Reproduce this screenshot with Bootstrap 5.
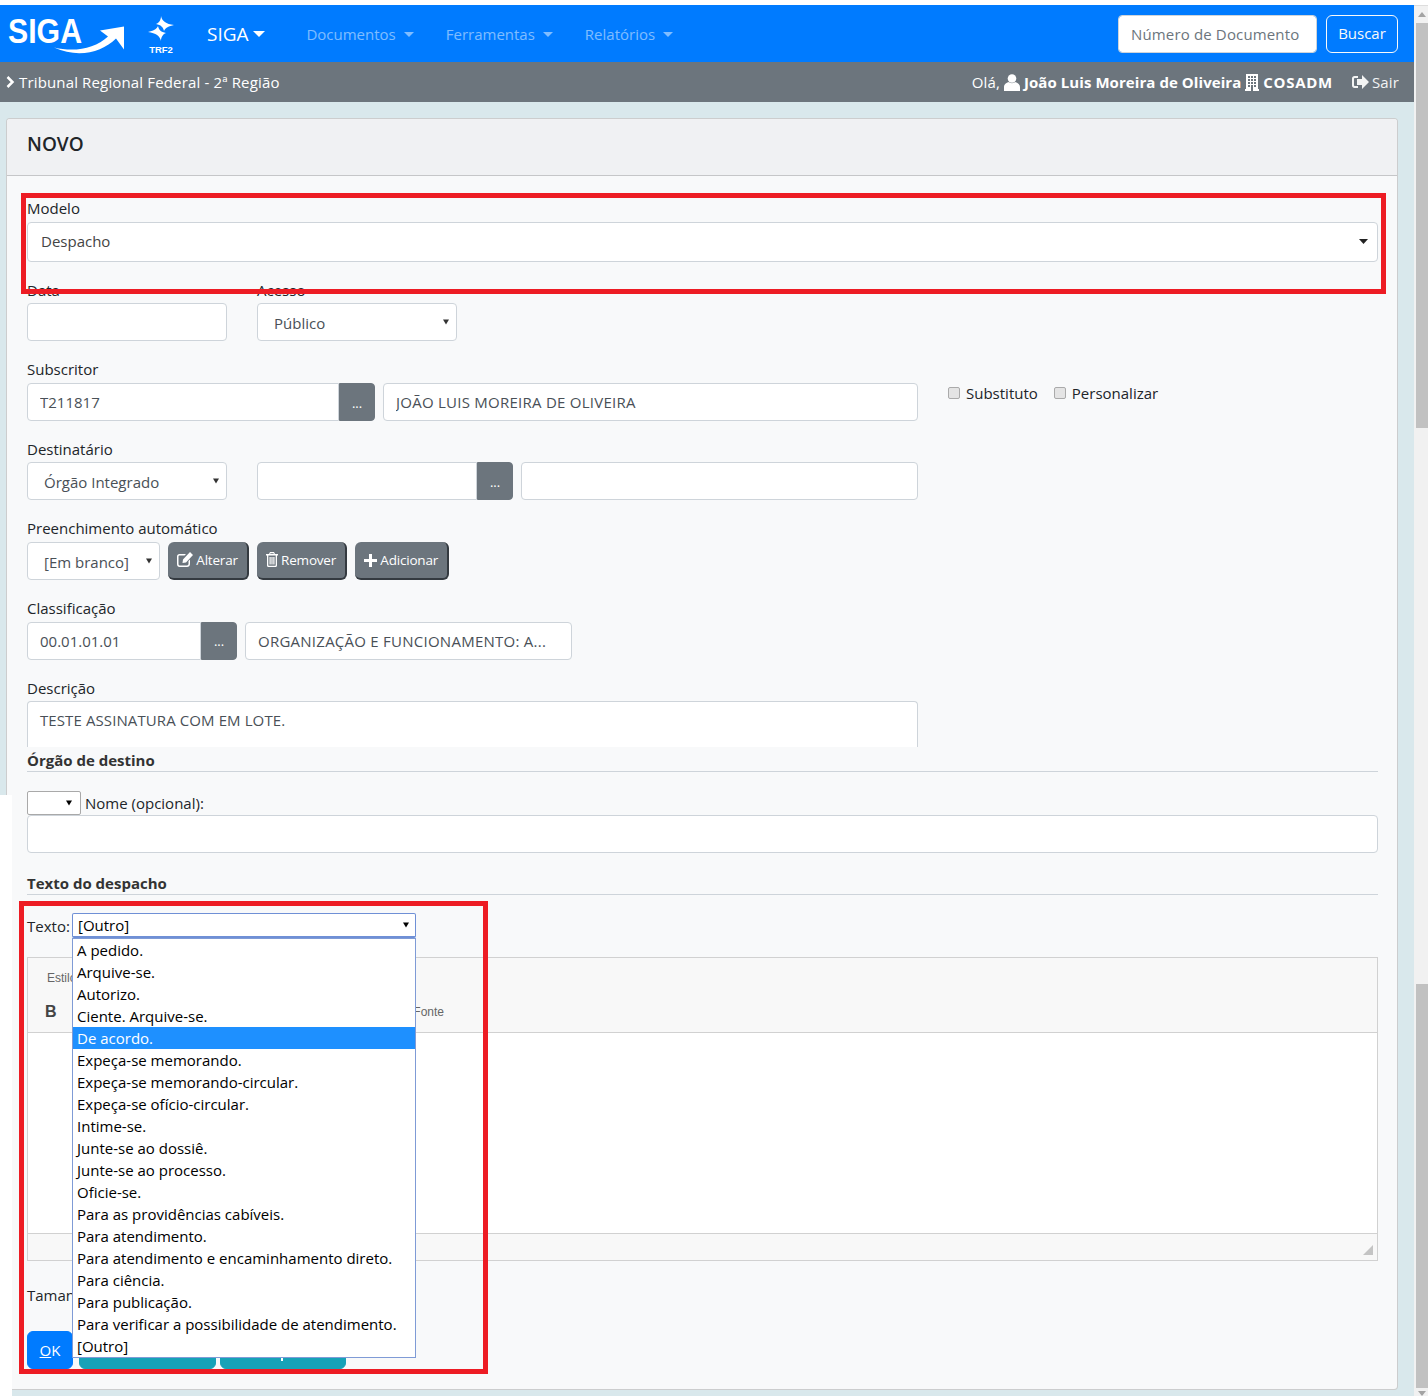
<!DOCTYPE html>
<html lang="pt-BR">
<head>
  <meta charset="UTF-8" />
  <meta name="viewport" content="width=device-width, initial-scale=1.0"/>
  <title>SIGA - Novo documento</title>
  <link href="https://cdn.jsdelivr.net/npm/bootstrap@5.3.0/dist/css/bootstrap.min.css" rel="stylesheet">
  <style>
    :root {
      --bs-border-radius: .25rem;
    }

    html, body {
      height: 1396px;
      overflow: hidden;
    }

    body {
      background: #fff;
      color: #212529;
      font-family: "Open Sans", "Liberation Sans", sans-serif;
      font-size: 15px;
      line-height: 24px;
    }

    .shell {
      position: relative;
      height: 1396px;
      padding-top: 5px;
    }

    .page {
      width: 1414px;
      background: #d9e8ec;
      height: 1391px;
    }

    /* fake browser scrollbar */
    .scroll-rail {
      width: 14px;
      background: #f1f1f1;
      height: 1391px;
      border-top: 1px solid #ddd;
    }

    .scroll-arrow {
      width: 0;
      height: 0;
      margin: 6px 0 0 4px;
      border-left: 4px solid transparent;
      border-right: 4px solid transparent;
      border-bottom: 5px solid #a3a3a3;
    }

    .scroll-thumb {
      width: 12px;
      margin-left: 2px;
      background: #c1c1c1;
    }

    .thumb-one { height: 405px; margin-top: 6px; }
    .thumb-two { height: 404px; margin-top: 556px; }
    .scroll-arrow-down {
      border-bottom: 0;
      border-top: 5px solid #a3a3a3;
      margin-top: 3px;
    }

    /* top bars */
    .bar-main {
      height: 57px;
      background: #007bff;
      padding: 0 16px 0 0;
    }

    .logo-siga { width: 126px; height: 44px; margin-left: 6px; }
    .logo-trf { width: 30px; height: 42px; margin-left: 14px; }
    .logo-text { font-family: "Liberation Sans", sans-serif; fill: #fff; font-weight: 700; }

    .brand-link {
      color: #fff;
      font-size: 19px;
      margin-left: 31px;
      margin-right: 25px;
    }

    .brand-link.dropdown-toggle::after { vertical-align: .18em; border-width: .36em .36em 0; }

    .bar-main .nav-link {
      color: rgba(255, 255, 255, .5);
      padding: 0 16px;
    }

    .bar-main .nav-link.dropdown-toggle::after {
      margin-left: 8px;
      vertical-align: .2em;
      border-width: 5px 5px 0;
    }

    .doc-search {
      width: 199px;
      height: 38px;
      margin-right: 9px;
      letter-spacing: .15px;
    }

    .doc-search::placeholder { color: #6c757d; }

    .buscar-btn { height: 38px; width: 72px; padding: 0; font-size: 15px; }

    .bar-sub {
      height: 40px;
      background: #6c757d;
      color: #fff;
      padding: 0 15px 0 6px;
      letter-spacing: .15px;
    }

    .bar-sub svg { fill: #fff; flex-shrink: 0; }
    .bar-sub strong { letter-spacing: .07px; }
    .bar-sub .org-name { letter-spacing: .7px; }
    .exit-link { margin-left: 19px; opacity: .92; gap: 3px; }

    /* card */
    .main-area { padding: 16px 16px 0 6px; }

    .form-card {
      background: #f8f9fa;
      height: 1272px;
    }

    .form-card .card-header {
      height: 60px;
      padding: 0 20px;
      font-size: 19px;
      font-weight: 600;
      line-height: 50px;
      background: #f0f1f3;
    }

    .form-card .card-body { padding: 20px 19px 20px 20px; }

    .fld-label { display: block; margin-bottom: 1.6px; }
    .fld-group { margin-bottom: 16px; }

    .form-control, .form-select {
      font-size: 15px;
      color: #495057;
      height: 38px;
      border-color: #ced4da;
      border-radius: .25rem;
    }

    .upper-txt { letter-spacing: .25px; }

    .form-select {
      padding: 2px 20px 0 16px;
      background-image: url("data:image/svg+xml,%3Csvg xmlns='http://www.w3.org/2000/svg' viewBox='0 0 7 6'%3E%3Cpath d='M0 0h7L3.5 6z' fill='%23333'/%3E%3C/svg%3E");
      background-size: 6px 6px;
      background-position: right 7px center;
    }

    .model-select {
      height: 40px;
      padding: 0 20px 0 13px;
      color: #444;
      background-image: url("data:image/svg+xml,%3Csvg xmlns='http://www.w3.org/2000/svg' viewBox='0 0 9 5'%3E%3Cpath d='M0 0h9L4.5 5z' fill='%23222'/%3E%3C/svg%3E");
      background-size: 9px 5px;
      background-position: right 9px center;
    }

    .dots-btn {
      width: 36px;
      height: 38px;
      padding: 3px 0 0;
      flex-shrink: 0;
      font-size: 13px;
      background: #6c757d;
      border-color: #6c757d;
    }

    .w-27 { width: 200px; }
    .w-133 { width: 133px; }
    .w-174 { width: 174px; }
    .w-220 { width: 220px; }
    .w-312 { width: 312px; }
    .w-327 { width: 327px; }
    .w-397 { width: 397px; }
    .w-535 { width: 535px; }
    .ms-gap { margin-left: 8px; }
    .ms-col { margin-left: 30px; }

    .join-left { border-radius: .25rem 0 0 .25rem; }
    .join-right { border-radius: 0 .25rem .25rem 0; }

    .check-line { margin-left: 30px; height: 20px; align-self: flex-start; }
    .check-line label { display: flex; align-items: center; gap: 6px; margin-right: 16px; }
    .check-box {
      appearance: none;
      width: 12px;
      height: 12px;
      background: #e4e4e4;
      border: 1px solid #aaa;
      border-radius: 2px;
      margin: 0;
    }

    .action-btn {
      height: 38px;
      padding: 1px 9px 0;
      font-size: 13.5px;
      color: #fff;
      background: #6c757d;
      border: 0;
      border-right: 2px solid #343a40;
      border-bottom: 2px solid #343a40;
      margin-left: 8px;
      letter-spacing: -.2px;
    }

    .action-btn svg { fill: #fff; vertical-align: -2px; }

    .desc-box {
      width: 891px;
      height: 46px;
      resize: none;
      overflow: hidden;
      border-bottom: 0;
      border-radius: .25rem .25rem 0 0;
      padding-top: 7px;
      letter-spacing: .1px;
    }

    .sect-title {
      font-weight: 700;
      color: #333;
      border-bottom: 1px solid #ced4da;
      height: 25px;
      line-height: 26px;
    }

    .nome-row { margin-top: 18.8px; }
    .texto-title { margin-top: 17px; }

    .mini-select {
      width: 54px;
      height: 24px;
      padding: 0;
      background-color: #fff;
      border: 1px solid #a9a9a9;
      border-radius: 2px;
      background-position: right 8px center;
      background-image: url("data:image/svg+xml,%3Csvg xmlns='http://www.w3.org/2000/svg' viewBox='0 0 7 6'%3E%3Cpath d='M0 0h7L3.5 6z' fill='%23000'/%3E%3C/svg%3E");
    }

    .text-row { margin-top: 18px; height: 25px; }
    .text-name { width: 41px; flex-shrink: 0; white-space: nowrap; }
    .text-pick { position: relative; margin-left: 4px; }

    .pick-select {
      width: 344px;
      height: 25px;
      padding: 0 0 0 5px;
      color: #000;
      background-color: #fff;
      border: 1px solid #6f90d6;
      border-bottom-width: 2px;
      border-radius: 2px;
      background-position: right 6px center;
      background-image: url("data:image/svg+xml,%3Csvg xmlns='http://www.w3.org/2000/svg' viewBox='0 0 7 6'%3E%3Cpath d='M0 0h7L3.5 6z' fill='%23000'/%3E%3C/svg%3E");
    }

    .pick-list {
      position: absolute;
      z-index: 5;
      top: 25px;
      left: 0;
      width: 344px;
      background: #fff;
      border: 1px solid #7f9bd6;
      color: #000;
      line-height: 22px;
      margin: 0;
      padding: 0;
      list-style: none;
    }

    .pick-list li { height: 22px; padding-left: 4px; white-space: nowrap; }
    .pick-list li.on { background: #1e90ff; color: #fff; }

    .editor-box {
      margin-top: 19px;
      height: 304px;
      border: 1px solid #d1d1d1;
      background: #f8f8f8;
      font-family: "Liberation Sans", sans-serif;
      font-size: 12px;
      color: #666;
    }

    .editor-tools {
      height: 75px;
      border-bottom: 1px solid #d1d1d1;
      padding: 8px 0 0 19px;
    }

    .editor-tools .tool-row { width: 397px; margin-top: 10px; }
    .editor-tools b { font-size: 16px; color: #444; margin-left: -2px; }

    .editor-body { height: 201px; background: #fff; border-bottom: 1px solid #d1d1d1; }

    .editor-foot { height: 25px; padding: 0 4px 4px 0; }
    .grip { width: 0; height: 0; border-left: 10px solid transparent; border-bottom: 10px solid #c4c4c4; }

    .size-row { margin-top: 22px; height: 24px; }

    .foot-btns { margin-top: 24px; }
    .foot-btns .btn { height: 38px; padding: 0; font-size: 15px; }
    .btn-ok { width: 46px; margin-right: 6px; background: #007bff; border-color: #007bff; }
    .btn-look { background: #17a2b8; border-color: #17a2b8; color: #fff; }
    .look-one { width: 137px; margin-right: 4px; }
    .look-two { width: 126px; position: relative; }
    /* bit of a letter's tail that peeks out under the open list */
    .look-two::after {
      content: "";
      position: absolute;
      left: 60px;
      top: 26px;
      width: 2px;
      height: 3px;
      background: #fff;
    }

    /* annotations laid over the page */
    .mark-red {
      position: absolute;
      z-index: 9;
      border: 5px solid #ed1c24;
      pointer-events: none;
    }

    .mark-model { left: 21px; top: 193px; width: 1365px; height: 101px; }
    .mark-text { left: 19px; top: 901px; width: 469px; height: 473px; }

    .white-edge {
      position: absolute;
      z-index: 3;
      left: 0;
      top: 795px;
      width: 12px;
      height: 601px;
      background: #fff;
    }
  </style>
</head>
<body>
  <div class="shell">
    <div class="d-flex">
      <div class="page">
        <nav class="bar-main d-flex align-items-center">
          <svg class="logo-siga" viewBox="0 0 126 44">
            <text class="logo-text" x="2" y="30.5" font-size="35" textLength="74" lengthAdjust="spacingAndGlyphs">SIGA</text>
            <path d="M48 35.5C69 40.5 89 36.5 102 24.5L94 18.5L118 14.5L118 37.5L110 26.5C96 40.5 72 46.5 48 35.5Z" fill="#fff"/>
          </svg>
          <svg class="logo-trf" viewBox="0 0 30 42">
            <path d="M15 3C16 8 20 11 28 12C23 13 19 15 18 18C17 14 15 12 10 11C13 10 15 7 15 3Z" fill="#fff"/>
            <path d="M15 3C16 8 20 11 28 12C23 13 19 15 18 18C17 14 15 12 10 11C13 10 15 7 15 3Z" fill="#fff" transform="rotate(180 15 15.5)"/>
            <text class="logo-text" x="15" y="40" font-size="9.5" text-anchor="middle">TRF2</text>
          </svg>
          <a class="brand-link dropdown-toggle text-decoration-none" href="#">SIGA</a>
          <a class="nav-link dropdown-toggle" href="#">Documentos</a>
          <a class="nav-link dropdown-toggle" href="#">Ferramentas</a>
          <a class="nav-link dropdown-toggle" href="#">Relatórios</a>
          <input class="form-control doc-search ms-auto" type="text" placeholder="Número de Documento">
          <button class="btn btn-outline-light buscar-btn" type="button">Buscar</button>
        </nav>

        <div class="bar-sub d-flex align-items-center">
          <svg width="9" height="12" viewBox="0 0 9 12"><path d="M1.5 1L6.5 6L1.5 11" fill="none" stroke="#fff" stroke-width="2.5"/></svg>
          <span class="ms-1">Tribunal Regional Federal - 2ª Região</span>
          <span class="ms-auto">Olá,</span>
          <svg class="ms-1" width="16" height="17" viewBox="0 0 16 17"><circle cx="8" cy="4.5" r="4.3"/><path d="M0 17V13C0 10 3 8.5 5 8C6 9.5 10 9.5 11 8C13 8.5 16 10 16 13V17Z"/></svg>
          <strong class="ms-1">João Luis Moreira de Oliveira</strong>
          <svg class="ms-1" width="14" height="17" viewBox="0 0 14 17"><path fill-rule="evenodd" d="M1 0H13V15H14V17H0V15H1ZM3 2V4H5V2ZM6 2V4H8V2ZM9 2V4H11V2ZM3 5V7H5V5ZM6 5V7H8V5ZM9 5V7H11V5ZM3 8V10H5V8ZM6 8V10H8V8ZM9 8V10H11V8ZM3 11V13H5V11ZM9 11V13H11V11ZM6 11V17H8V11Z"/></svg>
          <strong class="ms-1 org-name">COSADM</strong>
          <span class="exit-link d-flex align-items-center">
            <svg width="17" height="14" viewBox="0 0 17 14"><path d="M6 1H2.5C1 1 0 2 0 3.5V10.5C0 12 1 13 2.5 13H6V11H3C2.4 11 2 10.6 2 10V4C2 3.4 2.4 3 3 3H6ZM10 0L17 7L10 14V10H5V4H10Z"/></svg>
            <span>Sair</span>
          </span>
        </div>

        <div class="main-area">
          <div class="card form-card">
            <div class="card-header">NOVO</div>
            <div class="card-body">
              <div class="fld-group">
                <label class="fld-label">Modelo</label>
                <select class="form-select model-select"><option>Despacho</option></select>
              </div>

              <div class="fld-group d-flex">
                <div class="w-27">
                  <label class="fld-label">Data</label>
                  <input class="form-control" type="text">
                </div>
                <div class="w-27 ms-col">
                  <label class="fld-label">Acesso</label>
                  <select class="form-select"><option>Público</option></select>
                </div>
              </div>

              <div class="fld-group">
                <label class="fld-label">Subscritor</label>
                <div class="d-flex">
                  <input class="form-control w-312 join-left" type="text" value="T211817">
                  <button class="btn btn-secondary dots-btn join-right" type="button">...</button>
                  <input class="form-control w-535 ms-gap upper-txt" type="text" value="JOÃO LUIS MOREIRA DE OLIVEIRA">
                  <div class="check-line d-flex align-items-center">
                    <label><input class="check-box" type="checkbox">Substituto</label>
                    <label><input class="check-box" type="checkbox">Personalizar</label>
                  </div>
                </div>
              </div>

              <div class="fld-group">
                <label class="fld-label">Destinatário</label>
                <div class="d-flex">
                  <select class="form-select w-27"><option>Órgão Integrado</option></select>
                  <input class="form-control w-220 ms-col join-left" type="text">
                  <button class="btn btn-secondary dots-btn join-right" type="button">...</button>
                  <input class="form-control w-397 ms-gap" type="text">
                </div>
              </div>

              <div class="fld-group">
                <label class="fld-label">Preenchimento automático</label>
                <div class="d-flex">
                  <select class="form-select w-133"><option>[Em branco]</option></select>
                  <button class="btn action-btn" type="button">
                    <svg width="16" height="15" viewBox="0 0 16 15"><path fill-rule="evenodd" d="M2.5 2H9L7.5 3.5H2.5C2 3.5 1.5 4 1.5 4.5V12C1.5 12.7 2 13.5 2.5 13.5H10C10.7 13.5 11.5 12.7 11.5 12V9L13 7.5V12C13 13.7 11.7 15 10 15H2.5C1 15 0 13.7 0 12V4.5C0 3 1 2 2.5 2ZM13 0L16 3L9 10.5L5.5 11L6 7.5Z"/></svg>
                    Alterar
                  </button>
                  <button class="btn action-btn" type="button">
                    <svg width="12" height="15" viewBox="0 0 12 15"><path fill-rule="evenodd" d="M4 0H8L9 2H12V3.5H11V13.5C11 14.4 10.4 15 9.5 15H2.5C1.6 15 1 14.4 1 13.5V3.5H0V2H3ZM4.5 1.2L4.2 2H7.8L7.5 1.2ZM2.3 3.5V13.2C2.3 13.5 2.5 13.7 2.8 13.7H9.2C9.5 13.7 9.7 13.5 9.7 13.2V3.5ZM3.5 5H4.7V12.5H3.5ZM5.4 5H6.6V12.5H5.4ZM7.3 5H8.5V12.5H7.3Z"/></svg>
                    Remover
                  </button>
                  <button class="btn action-btn" type="button">
                    <svg width="13" height="13" viewBox="0 0 13 13"><path d="M5 0H8V5H13V8H8V13H5V8H0V5H5Z"/></svg>
                    Adicionar
                  </button>
                </div>
              </div>

              <div class="fld-group">
                <label class="fld-label">Classificação</label>
                <div class="d-flex">
                  <input class="form-control w-174 join-left" type="text" value="00.01.01.01">
                  <button class="btn btn-secondary dots-btn join-right" type="button">...</button>
                  <input class="form-control w-327 ms-gap upper-txt" type="text" value="ORGANIZAÇÃO E FUNCIONAMENTO: A...">
                </div>
              </div>

              <label class="fld-label">Descrição</label>
              <textarea class="form-control desc-box">TESTE ASSINATURA COM EM LOTE.</textarea>

              <div class="sect-title">Órgão de destino</div>
              <div class="d-flex align-items-center nome-row">
                <select class="form-select mini-select"><option></option></select>
                <span class="ms-1">Nome (opcional):</span>
              </div>
              <input class="form-control" type="text">

              <div class="sect-title texto-title">Texto do despacho</div>
              <div class="text-row d-flex align-items-center">
                <span class="text-name">Texto:</span>
                <div class="text-pick">
                  <select class="form-select pick-select"><option>[Outro]</option></select>
                  <ul class="pick-list">
                    <li>A pedido.</li>
                    <li>Arquive-se.</li>
                    <li>Autorizo.</li>
                    <li>Ciente. Arquive-se.</li>
                    <li class="on">De acordo.</li>
                    <li>Expeça-se memorando.</li>
                    <li>Expeça-se memorando-circular.</li>
                    <li>Expeça-se ofício-circular.</li>
                    <li>Intime-se.</li>
                    <li>Junte-se ao dossiê.</li>
                    <li>Junte-se ao processo.</li>
                    <li>Oficie-se.</li>
                    <li>Para as providências cabíveis.</li>
                    <li>Para atendimento.</li>
                    <li>Para atendimento e encaminhamento direto.</li>
                    <li>Para ciência.</li>
                    <li>Para publicação.</li>
                    <li>Para verificar a possibilidade de atendimento.</li>
                    <li>[Outro]</li>
                  </ul>
                </div>
              </div>

              <div class="editor-box">
                <div class="editor-tools">
                  <div>Estilo</div>
                  <div class="tool-row d-flex justify-content-between align-items-center">
                    <b>B</b>
                    <span>Tamanho da Fonte</span>
                  </div>
                </div>
                <div class="editor-body"></div>
                <div class="editor-foot d-flex justify-content-end align-items-end"><div class="grip"></div></div>
              </div>

              <div class="size-row">Taman</div>

              <div class="foot-btns d-flex">
                <button class="btn btn-primary btn-ok" type="button"><u>O</u>K</button>
                <button class="btn btn-look look-one" type="button"></button>
                <button class="btn btn-look look-two" type="button"></button>
              </div>
            </div>
          </div>
        </div>
      </div>

      <div class="scroll-rail">
        <div class="scroll-arrow"></div>
        <div class="scroll-thumb thumb-one"></div>
        <div class="scroll-thumb thumb-two"></div>
        <div class="scroll-arrow scroll-arrow-down"></div>
      </div>
    </div>

    <div class="white-edge"></div>
    <div class="mark-red mark-model"></div>
    <div class="mark-red mark-text"></div>
  </div>

  <script src="https://cdn.jsdelivr.net/npm/bootstrap@5.3.0/dist/js/bootstrap.bundle.min.js"></script>
</body>
</html>
